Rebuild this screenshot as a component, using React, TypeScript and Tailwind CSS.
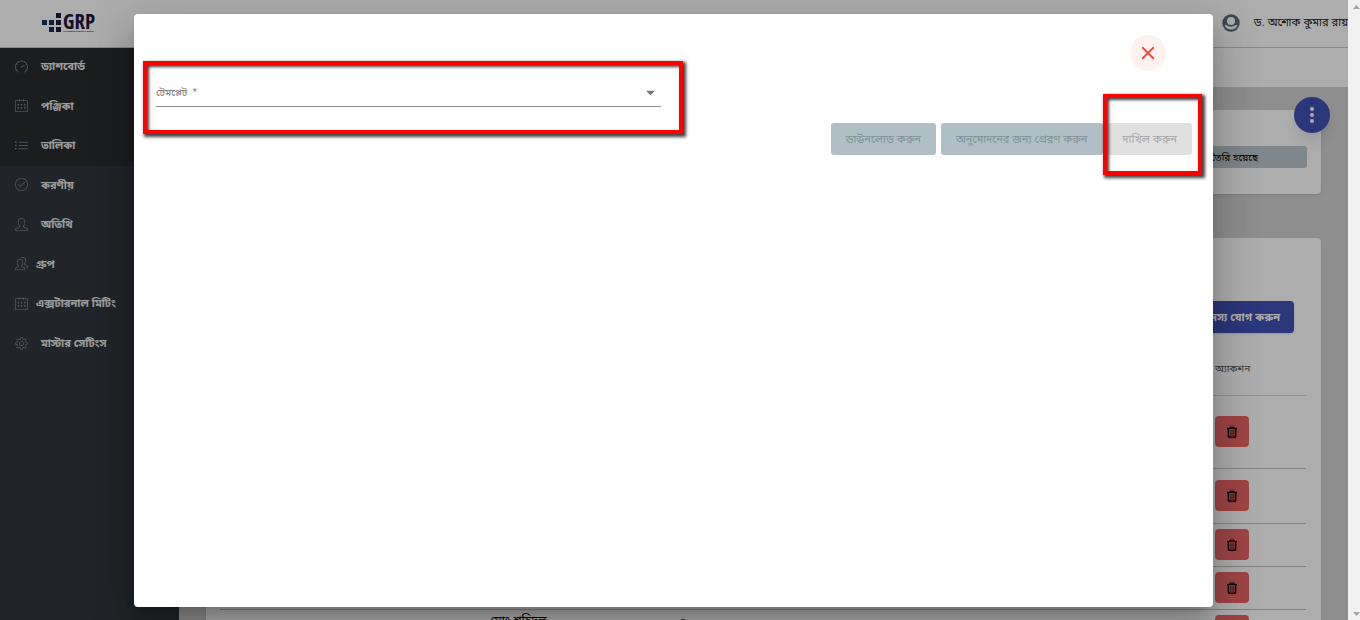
import { SlCalender, SlCheck, SlList, SlPeople, SlSettings, SlSpeedometer, SlUser } from 'react-icons/sl';
import { MdAccountCircle, MdArrowDropDown, MdClose, MdMoreVert } from 'react-icons/md';
import type { IconType } from 'react-icons';

interface MenuItem {
  label: string;
  icon: IconType;
  tight?: boolean;
}

const topMenu: MenuItem[] = [
  { label: 'ড্যাশবোর্ড', icon: SlSpeedometer },
  { label: 'পঞ্জিকা', icon: SlCalender },
  { label: 'তালিকা', icon: SlList },
];

const mainMenu: MenuItem[] = [
  { label: 'করণীয়', icon: SlCheck },
  { label: 'অতিথি', icon: SlUser },
  { label: 'গ্রুপ', icon: SlPeople, tight: true },
  { label: 'এক্সটারনাল মিটিং', icon: SlCalender, tight: true },
  { label: 'মাস্টার সেটিংস', icon: SlSettings },
];

const rows = [
  { id: 1, name: '', height: 'h-[73px]' },
  { id: 2, name: '', height: 'h-[55px]' },
  { id: 3, name: '', height: 'h-[43px]' },
  { id: 4, name: '', height: 'h-[43px]' },
  { id: 5, name: 'মোঃ শহিদুল', height: 'h-[43px]' },
];

function Logo() {
  return (
    <a href="#" aria-label="GRP" className="flex items-center gap-px text-[#1f1646]">
      <svg width="20" height="21" viewBox="0 0 20 21">
        <g fill="#1d2c5c">
          <rect x="0" y="8" width="5" height="5" />
          <rect x="7" y="8" width="5" height="5" />
          <rect x="7" y="15" width="5" height="5" />
        </g>
        <g fill="#1f1646">
          <rect x="14" y="1" width="5" height="5" />
          <rect x="14" y="8" width="5" height="5" />
          <rect x="14" y="15" width="5" height="5" />
        </g>
      </svg>
      <span className="flex flex-col">
        <span className="font-['Open_Sans_Condensed','Liberation_Sans_Narrow',sans-serif] text-[21px] leading-[18px] font-bold">GRP</span>
        <span className="text-[2px] leading-[3px] font-bold whitespace-nowrap">Government Resource Planning</span>
      </span>
    </a>
  );
}

function ProfileIcon() {
  return (
    <svg width="18" height="18" viewBox="0 0 18 18">
      <circle cx="9" cy="9" r="8.7" fill="#5d6b7a" />
      <circle cx="9" cy="7" r="4" fill="#fff" />
      <path d="M2.6 11.2C3.6 10.6 4.6 10.9 5.6 11.7c2 1.5 4.8 1.5 6.8 0 1-.8 2-1.1 3-.5a6.9 6.9 0 0 1-12.8 0Z" fill="#fff" />
    </svg>
  );
}

function TrashIcon() {
  return (
    <svg width="12" height="12" viewBox="0 0 12 12" fill="none" stroke="currentColor">
      <path d="M1 2.5h10" strokeWidth="1.2" />
      <path d="M4 2.4V1h4v1.4" strokeWidth="1" />
      <path d="M2.4 3v7.2c0 .6.4 1 1 1h5.2c.6 0 1-.4 1-1V3" strokeWidth="1.5" />
      <path d="M4.9 4v6M7.1 4v6" strokeWidth="0.8" />
    </svg>
  );
}

function MenuLink({ item }: { item: MenuItem }) {
  const Icon = item.icon;
  return (
    <a
      href="#"
      className={`flex items-center pb-0.5 pl-[15px] text-[11px] font-bold text-[#e4e6e8] ${item.tight ? 'gap-2' : 'gap-[13px]'}`}
    >
      <Icon className="size-[13px] text-[#6f7f90]" />
      {item.label}
    </a>
  );
}

// Red frame drawn over the control it points at
function Highlight({ className }: { className: string }) {
  return (
    <div
      className={`pointer-events-none absolute z-10 border-4 border-[#ff0000] shadow-[2px_2px_3px_1px_rgba(0,0,0,0.75),inset_2px_2px_3px_rgba(0,0,0,0.75)] ${className}`}
    />
  );
}

function TemplateDialog() {
  return (
    <div
      role="dialog"
      aria-modal="true"
      className="relative flex h-full w-full flex-col rounded bg-white shadow-[0_11px_15px_-7px_rgba(0,0,0,0.2),0_24px_38px_3px_rgba(0,0,0,0.14),0_9px_46px_8px_rgba(0,0,0,0.12)]"
    >
      <div className="flex justify-end pt-[21px] pr-[47px]">
        <button aria-label="close" className="flex size-9 items-center justify-center rounded-full bg-[#fef2f1] text-[#f44336]">
          <MdClose className="size-[22px]" />
        </button>
      </div>

      <div className="flex pl-[22px]">
        <div className="relative w-[48%] max-w-[505px]">
          <Highlight className="-top-[10px] -right-[22px] -left-[13px] h-[73px]" />
          <div className="relative mt-[9px] flex h-[27px] items-center border-b border-[#8f8f8f] pb-0.5">
            <select
              aria-label="টেমপ্লেট *"
              required
              className="h-full w-full appearance-none bg-transparent text-[10px] text-[#757575] outline-none"
            >
              <option>টেমপ্লেট&nbsp; *</option>
            </select>
            <MdArrowDropDown className="pointer-events-none absolute right-0 size-[21px] text-[#757575]" />
          </div>
        </div>
      </div>

      <div className="mt-4 flex justify-end gap-[5px] pr-[21px] text-[11px]">
        <button disabled className="h-8 rounded-[3px] bg-[#b0bec5] px-[15px] text-[#84919a]">
          ডাউনলোড করুন
        </button>
        <button disabled className="h-8 rounded-[3px] bg-[#b0bec5] px-[15px] text-[#84919a]">
          অনুমোদনের জন্য প্রেরণ করুন
        </button>
        <div className="relative">
          <Highlight className="-top-[29px] -right-[10px] -bottom-5 -left-[5px]" />
          <button disabled className="h-8 rounded-[3px] bg-[#e0e0e0] px-[15px] text-[#a6a6a6]">
            দাখিল করুন
          </button>
        </div>
      </div>
    </div>
  );
}

export default function App() {
  return (
    <div className="relative flex h-screen overflow-hidden bg-[#d1d1d1] font-['Liberation_Sans','Noto_Sans_Bengali','Noto_Sans',sans-serif]">
      <div className="relative flex min-w-0 flex-1 flex-col overflow-hidden">
        <header className="flex h-12 shrink-0 items-center justify-between border-b border-[#c4c4c4] bg-white pb-0.5 pl-[42px]">
          <Logo />
          <div className="flex items-center gap-[14px] text-[11px] whitespace-nowrap text-[#222]">
            <ProfileIcon />
            ড. অশোক কুমার রায়
          </div>
        </header>

        <div className="flex min-h-0 flex-1">
          <nav className="flex w-[179px] shrink-0 flex-col bg-[#31363b]">
            <div className="grid h-[118px] grid-rows-3 bg-[#282b2f]">
              {topMenu.map((item) => (
                <MenuLink key={item.label} item={item} />
              ))}
            </div>
            <div className="grid h-[198px] grid-rows-5">
              {mainMenu.map((item) => (
                <MenuLink key={item.label} item={item} />
              ))}
            </div>
          </nav>

          <main className="min-w-0 flex-1">
            <div className="h-[39px] bg-white" />
            <div className="flex flex-col gap-11 py-[23px] pr-[27px] pl-[27px]">
              <section className="flex h-[84px] items-center justify-end rounded bg-white pt-[10px] pr-[14px] shadow">
                <span className="flex h-[22px] w-[120px] items-center justify-end rounded-[3px] bg-[#bcc8ce] pr-[49px] text-[10px] whitespace-nowrap text-black">
                  তৈরি হয়েছে
                </span>
              </section>

              <section className="rounded bg-white pt-[63px] pr-[15px] pl-[14px] shadow">
                <div className="flex justify-end pr-3">
                  <button className="h-8 rounded bg-[#3f51b5] px-[14px] text-[11px] font-bold text-white shadow">
                    সদস্য যোগ করুন
                  </button>
                </div>
                <table className="mt-[7px] w-full table-fixed text-left text-[12px]">
                  <thead>
                    <tr className="h-[55px] border-b border-[#d8d8d8] text-[#555]">
                      <th className="w-[90px]" />
                      <th className="w-[180px]" />
                      <th className="w-[185px]" />
                      <th />
                      <th className="w-[93px] pt-[2px] pl-[2px] text-[10px] font-normal">অ্যাকশন</th>
                    </tr>
                  </thead>
                  <tbody>
                    {rows.map((row) => (
                      <tr key={row.id} className={`border-b border-[#c0c0c0] ${row.height}`}>
                        <td />
                        <td />
                        <td className="pt-0.5 align-top">{row.name}</td>
                        <td className="pt-2 align-top">{row.name && <MdAccountCircle className="size-4" />}</td>
                        <td className="pl-[2px]">
                          <button aria-label="delete" className="flex h-[31px] w-[34px] items-center justify-center rounded bg-[#eb6565] text-black">
                            <TrashIcon />
                          </button>
                        </td>
                      </tr>
                    ))}
                  </tbody>
                </table>
              </section>
            </div>
          </main>
        </div>

        <button
          aria-label="menu"
          className="absolute top-[97px] right-[18px] flex size-9 items-center justify-center rounded-full bg-[#3f51b5] text-white shadow-lg"
        >
          <MdMoreVert className="size-6" />
        </button>
      </div>

      <div className="absolute inset-0 bg-black/32 pt-[14px] pr-[147px] pb-[13px] pl-[134px]">
        <TemplateDialog />
      </div>

      <div className="relative flex w-3 shrink-0 flex-col items-end justify-between bg-[#f1f1f1] pt-[5px] pb-1 text-[#a3a3a3]">
        <svg width="7" height="4" viewBox="0 0 7 4" fill="currentColor">
          <path d="M0 4 3.5 0 7 4Z" />
        </svg>
        <svg width="7" height="4" viewBox="0 0 7 4" fill="currentColor">
          <path d="M0 0 3.5 4 7 0Z" />
        </svg>
      </div>
    </div>
  );
}
